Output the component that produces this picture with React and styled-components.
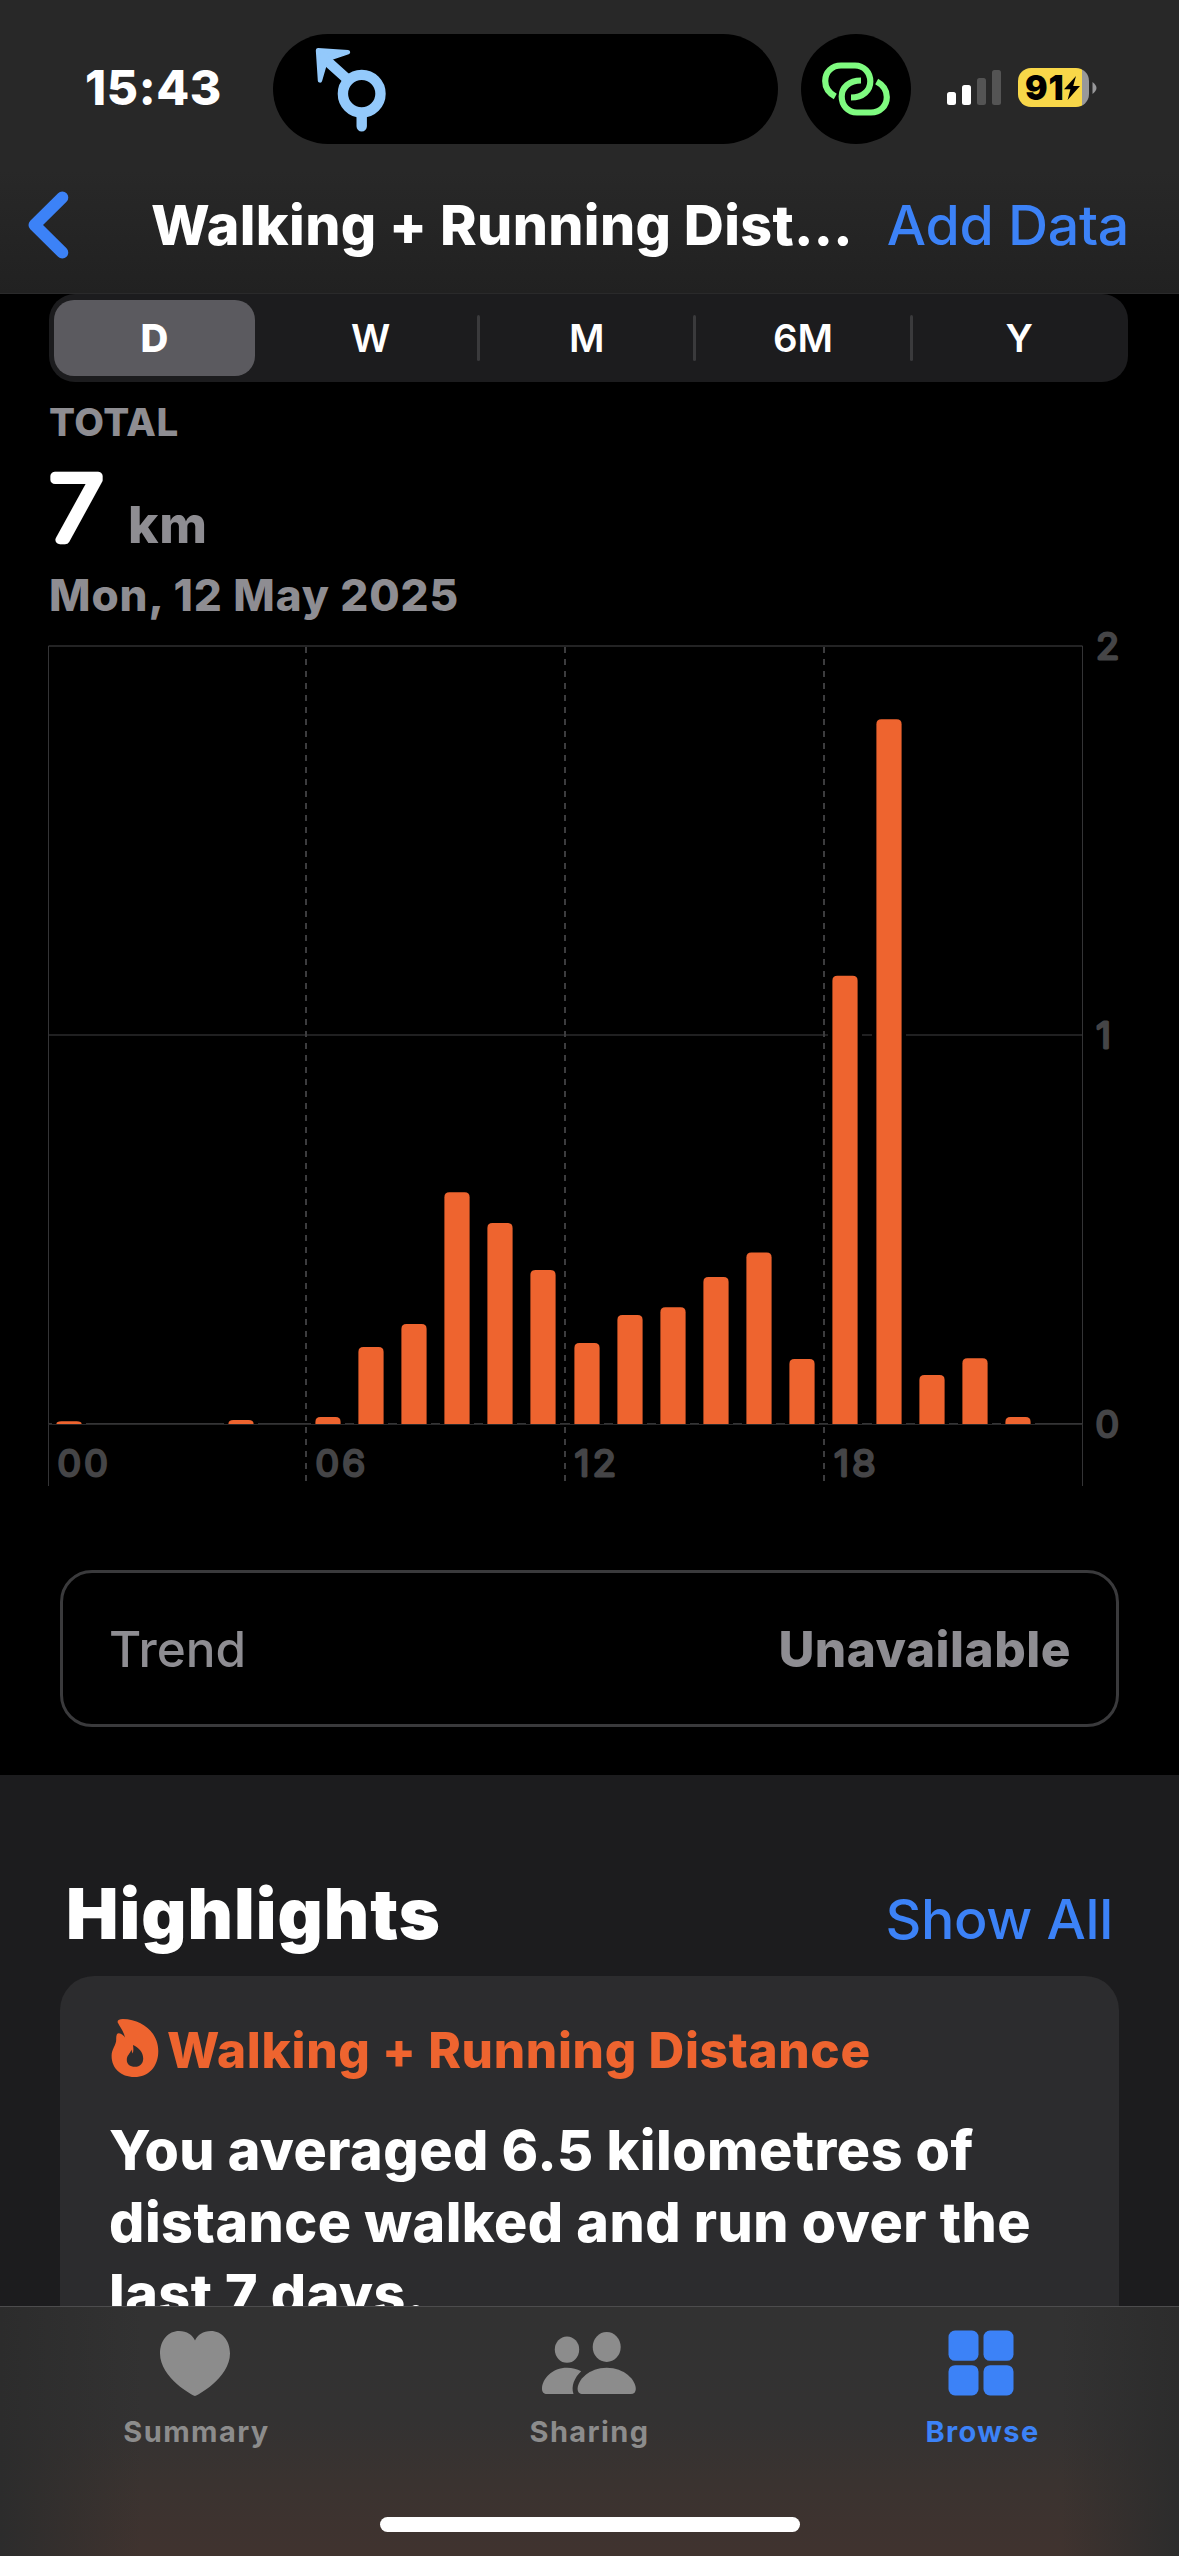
import styled, { createGlobalStyle } from "styled-components";

const BLUE = "#3c82f7";
const ORANGE = "#ee642f";
const GREY = "#8e8d92";
const AXIS = "#454547";

const GlobalStyle = createGlobalStyle`
  body {
    margin: 0;
    background: #000;
  }
  * {
    box-sizing: border-box;
  }
  svg {
    display: block;
    flex: none;
  }
`;

const Screen = styled.div`
  width: 1179px;
  height: 2556px;
  display: flex;
  flex-direction: column;
  overflow: hidden;
  background: #000;
  color: #fff;
  font-family: Inter, "Liberation Sans", sans-serif;
  white-space: nowrap;
`;

const Header = styled.header`
  flex: none;
  height: 294px;
  padding-top: 34px;
  background: linear-gradient(#282828 0%, #282828 58%, #212121 100%);
  border-bottom: 1px solid #2a2a2b;
`;

const StatusBar = styled.div`
  height: 110px;
  display: flex;
  align-items: center;
`;

const Time = styled.span`
  width: 273px;
  padding: 0 0 3px 85px;
  font-size: 48px;
  font-weight: 800;
  letter-spacing: 0.6px;
`;

const Island = styled.div`
  width: ${(props) => props.width}px;
  height: 110px;
  border-radius: 55px;
  margin-right: ${(props) => props.gap}px;
  background: #000;
`;

const IslandIcon = styled.div`
  padding-left: 27px;
`;

const Signal = styled.div`
  width: 71px;
  height: 35px;
  margin-bottom: 3px;
  display: flex;
  align-items: flex-end;
  gap: 6px;
`;

const SignalBar = styled.span`
  width: 9px;
  height: ${(props) => props.height}px;
  border-radius: 2.5px;
  background: ${(props) => (props.$active ? "#fff" : "#545454")};
`;

const Battery = styled.div`
  width: 71px;
  height: 39px;
  margin-bottom: 3px;
  padding-left: 7px;
  display: flex;
  align-items: center;
  border-radius: 13px;
  background: linear-gradient(to right, #f8d749 64px, #98989a 64px);
  color: #000;
  font-size: 33.5px;
  font-weight: 900;
  letter-spacing: 0.8px;
`;

const TipSlot = styled.div`
  margin-bottom: 3px;
`;

const NavBar = styled.nav`
  height: 149px;
  padding: 12px 50px 0 25px;
  display: flex;
  align-items: center;
  font-size: 55.5px;
`;

const NavTitle = styled.h1`
  margin: 0 0 0 79px;
  width: 737px;
  font-size: inherit;
  font-weight: 840;
  letter-spacing: 0.35px;
`;

const TextLink = styled.a`
  color: ${BLUE};
  font-size: 55.5px;
  font-weight: 470;
  letter-spacing: -0.3px;
`;

const Content = styled.main`
  flex: 1;
  min-height: 0;
  overflow: hidden;
  display: flex;
  flex-direction: column;
`;

const Segments = styled.div`
  flex: none;
  width: 1079px;
  height: 88px;
  margin-left: 49px;
  padding-left: 5px;
  display: flex;
  align-items: center;
  border-radius: 26px;
  background: #1c1c1e;
`;

const SegmentSlot = styled.div`
  display: flex;
  align-items: center;
`;

const Segment = styled.div`
  width: 201px;
  height: 76px;
  display: flex;
  align-items: center;
  justify-content: center;
  border-radius: 20px;
  font-size: 38.5px;
  font-weight: ${(props) => (props.$selected ? 760 : 600)};
  background: ${(props) => (props.$selected ? "#5b5a5f" : "transparent")};
`;

const Divider = styled.span`
  width: 3px;
  height: 46px;
  margin: 0 6.1px;
  border-radius: 2px;
  background: ${(props) => (props.$blank ? "transparent" : "#3a3a3c")};
`;

const Summary = styled.section`
  flex: none;
  padding: 15px 49px 0;
  color: ${GREY};
  font-weight: 800;
`;

const Caption = styled.div`
  line-height: 50px;
  font-size: 38.5px;
  letter-spacing: 0.5px;
`;

const Amount = styled.div`
  height: 108px;
  display: flex;
  align-items: flex-end;
  gap: 9px;

  svg {
    overflow: visible;
  }
`;

const Unit = styled.span`
  line-height: 61px;
  font-size: 51.5px;
  letter-spacing: 0.8px;
`;

const DateLine = styled.div`
  margin-top: 13px;
  line-height: 54px;
  font-size: 44px;
  letter-spacing: 0.9px;
`;

const Trend = styled.div`
  flex: none;
  height: 157px;
  margin: 70px 60px 48px;
  padding: 0 45px 0 46px;
  display: flex;
  align-items: center;
  justify-content: space-between;
  border: 3px solid #3a3a3c;
  border-radius: 32px;
  color: ${GREY};
  font-size: 49.5px;
`;

const TrendLabel = styled.span`
  font-weight: 460;
  letter-spacing: 0;
`;

const TrendValue = styled.span`
  font-weight: 800;
  letter-spacing: 0.5px;
`;

const HighlightsSection = styled.section`
  flex: 1;
  padding: 97px 60px 0;
  background: #1c1c1e;
`;

const SectionHead = styled.div`
  height: 84px;
  margin-bottom: 20px;
  padding: 0 6px;
  display: flex;
  align-items: baseline;
  justify-content: space-between;
`;

const SectionTitle = styled.h2`
  margin: 0;
  line-height: 84px;
  font-size: 70px;
  font-weight: 900;
  letter-spacing: 1px;
`;

const Card = styled.article`
  height: 640px;
  padding: 44px 49px 0;
  border-radius: 34px;
  background: #2c2c2e;
`;

const CardHead = styled.div`
  height: 60px;
  display: flex;
  align-items: center;
  gap: 8px;
  color: ${ORANGE};
  font-size: 49.5px;
  font-weight: 800;
  letter-spacing: 0.66px;

  svg {
    margin: 0 0 4px 2px;
  }
`;

const CardText = styled.p`
  margin: 34px 0 0;
  font-size: 55.5px;
  line-height: 72px;
  font-weight: 830;
  letter-spacing: 0.5px;
`;

const TabBar = styled.footer`
  flex: none;
  height: 250px;
  border-top: 1px solid #4c4c4d;
  background:
    linear-gradient(to right, #2c2c2c, transparent 12%, transparent 90%, #2c2c2c),
    linear-gradient(#323232 0%, #333232 45%, #3a3330 70%, #40332f 100%);
`;

const Tabs = styled.div`
  display: grid;
  grid-template-columns: repeat(3, 1fr);
`;

const Tab = styled.div`
  padding-top: 18px;
  display: flex;
  flex-direction: column;
  align-items: center;
  gap: 11px;
  color: ${(props) => (props.$active ? BLUE : "#8c8c8c")};
  font-size: 29px;
  line-height: 40px;
  font-weight: 650;
  letter-spacing: 1.4px;

  svg {
    margin-right: 3px;
  }
`;

const HomeIndicator = styled.div`
  width: 420px;
  height: 15px;
  margin: 65px auto 0;
  border-radius: 8px;
  background: #fff;
`;

const WayfindingIcon = () => (
  <svg width="110" height="110" viewBox="300 34 110 110">
    <g fill="none" stroke="#93c9fb" strokeWidth="10.4" strokeLinecap="round">
      <circle cx="361.7" cy="93.7" r="18.8" />
      <path d="M361.7 115v11.3M326 60l20 18" />
    </g>
    <path
      d="M318 50.3 348 52.2 331 57.8 324.5 65 320 80.5Z"
      fill="#93c9fb"
      stroke="#93c9fb"
      strokeWidth="4.4"
      strokeLinejoin="round"
    />
  </svg>
);

const LINK_LOOP =
  "M835.3 96C828.6 92.4 825.2 86.5 825.2 80.5C825.2 71.5 832 65 841 65H855C864 65 870.3 72 870.3 81C870.3 90 863 97 851 97";

const LinkIcon = () => (
  <svg width="110" height="110" viewBox="801 33.5 110 110">
    <g fill="none" stroke="#7ffb80" strokeWidth="6.2">
      <path d={LINK_LOOP} />
      <path d={LINK_LOOP} transform="rotate(180 856 88.5)" />
    </g>
  </svg>
);

const BoltIcon = () => (
  <svg width="16" height="24" viewBox="0 0 16 24">
    <path d="M12 0 0 13.2H6.4L3.6 24 16 10H9.2Z" fill="#000" />
  </svg>
);

const BatteryTip = () => (
  <svg width="8" height="12" viewBox="0 0 8 12">
    <path d="M3.5 0C6 2 7.5 4 7.5 6S6 10 3.5 12Z" fill="#98989a" />
  </svg>
);

const BackIcon = () => (
  <svg width="47" height="74" viewBox="25 187.5 47 74">
    <path
      d="M62.3 197 34.5 224.5 62.3 252"
      fill="none"
      stroke={BLUE}
      strokeWidth="12"
      strokeLinecap="round"
      strokeLinejoin="round"
    />
  </svg>
);

const FlameIcon = () => (
  <svg width="48" height="58" viewBox="0 0 48 58">
    <path
      fill="currentColor"
      fillRule="evenodd"
      d="M7 4C5.6 1.5 8 0 11.8 0C32 .5 47.3 14 47.3 32C47.3 48 37.5 58 23.5 58C9.5 58 .6 49 .6 37C.6 29.5 5.5 26.5 5.2 20C5.1 16 6 14 8 14.2C10.5 14.5 12.5 16.5 14 18.5C12.5 12 9 8 7 4ZM22 26C22.6 30 22.5 32 21.8 34.5C21 33 20.6 31.5 20.3 30.5C19.5 34.5 15.8 36 15.8 41C15.8 45 19 47.8 24 47.8C29 47.8 32.2 44.5 32.2 39.5C32.2 33 27.5 28.5 22 26Z"
    />
  </svg>
);

const HeartIcon = () => (
  <svg width="70" height="76" viewBox="0 -6 70 76">
    <path
      fill="currentColor"
      d="M35 65C33.5 65 0 47 0 22.5C0 9 8.5 0 19 0C27 0 32.5 4 35 9.5C37.5 4 43 0 51 0C61.5 0 70 9 70 22.5C70 47 36.5 65 35 65Z"
    />
  </svg>
);

const PeopleIcon = () => (
  <svg width="96" height="76" viewBox="540 2325 96 76">
    <g fill="currentColor">
      <ellipse cx="567" cy="2349.6" rx="12.2" ry="13.2" />
      <ellipse cx="606.7" cy="2347" rx="14" ry="15" />
      <path d="M582.7 2394C579.5 2394 577.6 2392 577.6 2389C577.6 2380 589 2367.7 606.7 2367.7C624.5 2367.7 635.8 2380 635.8 2389C635.8 2392 634 2394 630.8 2394Z" />
      <path d="M547 2394C544 2394 542 2392 542 2389C542 2378.5 552.5 2367.7 567 2367.7C572.5 2367.7 577 2369 581.2 2371.3C574.5 2377.5 570.8 2386.5 573.5 2394Z" />
    </g>
  </svg>
);

const GridIcon = () => (
  <svg width="66" height="76" viewBox="-0.5 -5.5 66 76">
    <g fill="currentColor">
      <rect x="0" y="0" width="30" height="30.3" rx="6.5" />
      <rect x="35" y="0" width="30" height="30.3" rx="6.5" />
      <rect x="0" y="34.7" width="30" height="30.3" rx="6.5" />
      <rect x="35" y="34.7" width="30" height="30.3" rx="6.5" />
    </g>
  </svg>
);

// thin face with a round-joined stroke gives the soft digits
const RoundText = styled.text`
  font-family: Inter, "Liberation Sans", sans-serif;
  font-size: ${(props) => props.$size}px;
  font-weight: ${(props) => props.$weight};
  letter-spacing: ${(props) => props.$spacing || 0}px;
  fill: ${(props) => props.$color};
  stroke: ${(props) => props.$color};
  stroke-width: ${(props) => props.$stroke}px;
  stroke-linejoin: round;
`;

// kilometres per hour of the day
const hours = [
  0.007, 0, 0, 0, 0.01, 0, 0.018, 0.198, 0.257, 0.596, 0.517, 0.396, 0.208,
  0.28, 0.3, 0.378, 0.441, 0.167, 1.152, 1.812, 0.126, 0.169, 0.018, 0,
];

const TOP = 646;
const BASE = 1424;
const LEFT = 48.5;
const RIGHT = 1082.5;
const FOOT = 1486;
const KM = (BASE - TOP) / 2;
const STEP = 43.15;
const BAR = 25.2;

const barPath = (x, h) => {
  const r = Math.min(5, h);
  return `M${x} ${BASE}V${BASE - h + r}q0 ${-r} 5 ${-r}H${x + BAR - 5}q5 0 5 ${r}V${BASE}Z`;
};

const Chart = () => {
  const bars = hours
    .map((km, i) => ({ x: Math.floor(56.2 + i * STEP) + 0.4, h: km * KM }))
    .filter((bar) => bar.h > 0);

  return (
    <svg width="1179" height="878" viewBox="0 622 1179 878">
      <g strokeWidth="2">
        <path d={`M${LEFT} ${TOP}H${RIGHT}`} stroke="#232324" />
        <path d={`M${LEFT} ${TOP + KM}H${RIGHT}`} stroke="#202021" />
        <path d={`M${LEFT} ${BASE}H${RIGHT}`} stroke="#343435" />
      </g>
      <g stroke="#343436" strokeWidth="1">
        <path d={`M${LEFT} ${TOP}V${FOOT}`} />
        <path d={`M${RIGHT} ${TOP}V${FOOT}`} />
      </g>
      <g stroke="#3c3c3e" strokeWidth="2" strokeDasharray="6 6">
        {[306, 565, 824].map((x) => (
          <path key={x} d={`M${x} ${TOP + 1}V${FOOT}`} />
        ))}
      </g>
      {bars.map(({ x, h }) => (
        <rect key={x} x={x - 4.4} y={BASE - h - 4} width={BAR + 8.8} height={h + 4.5} />
      ))}
      <path d={`M${LEFT} ${BASE + 0.5}H${RIGHT}`} stroke="#29292a" />
      {bars.map(({ x, h }) => (
        <path key={x} d={barPath(x, h)} fill={ORANGE} />
      ))}
      {[
        ["2", 1096, 658.5],
        ["1", 1096, 1047.5],
        ["0", 1095.5, 1436.8],
        ["00", 57.5, 1475.8],
        ["06", 315.5, 1475.8],
        ["12", 574.5, 1475.8],
        ["18", 834, 1475.8],
      ].map(([label, x, y]) => (
        <RoundText
          key={label}
          transform={`translate(${x} ${y}) scale(1.07 1)`}
          $size={35.5}
          $weight={360}
          $stroke={3}
          $spacing={3}
          $color={AXIS}
        >
          {label}
        </RoundText>
      ))}
    </svg>
  );
};

const App = () => {
  return (
    <Screen>
      <GlobalStyle />
      <Header>
        <StatusBar>
          <Time>15:43</Time>
          <Island width={505} gap={23}>
            <IslandIcon>
              <WayfindingIcon />
            </IslandIcon>
          </Island>
          <Island width={110} gap={36}>
            <LinkIcon />
          </Island>
          <Signal>
            <SignalBar height={13} $active />
            <SignalBar height={20} $active />
            <SignalBar height={27} />
            <SignalBar height={35} />
          </Signal>
          <Battery>
            91
            <BoltIcon />
          </Battery>
          <TipSlot>
            <BatteryTip />
          </TipSlot>
        </StatusBar>
        <NavBar>
          <BackIcon />
          <NavTitle>Walking + Running Dist…</NavTitle>
          <TextLink>Add Data</TextLink>
        </NavBar>
      </Header>
      <Content>
        <Segments>
          {["D", "W", "M", "6M", "Y"].map((label, i) => (
            <SegmentSlot key={label}>
              {i > 0 && <Divider $blank={i === 1} />}
              <Segment $selected={i === 0}>{label}</Segment>
            </SegmentSlot>
          ))}
        </Segments>
        <Summary>
          <Caption>TOTAL</Caption>
          <Amount>
            <svg width="70" height="108" viewBox="0 0 70 108">
              <RoundText
                transform="translate(0.5 92.5) scale(1.11 1)"
                $size={88}
                $weight={200}
                $stroke={8.5}
                $color="#fff"
              >
                7
              </RoundText>
            </svg>
            <Unit>km</Unit>
          </Amount>
          <DateLine>Mon, 12 May 2025</DateLine>
        </Summary>
        <Chart />
        <Trend>
          <TrendLabel>Trend</TrendLabel>
          <TrendValue>Unavailable</TrendValue>
        </Trend>
        <HighlightsSection>
          <SectionHead>
            <SectionTitle>Highlights</SectionTitle>
            <TextLink>Show All</TextLink>
          </SectionHead>
          <Card>
            <CardHead>
              <FlameIcon />
              Walking + Running Distance
            </CardHead>
            <CardText>
              You averaged 6.5 kilometres of
              <br />
              distance walked and run over the
              <br />
              last 7 days.
            </CardText>
          </Card>
        </HighlightsSection>
      </Content>
      <TabBar>
        <Tabs>
          <Tab>
            <HeartIcon />
            Summary
          </Tab>
          <Tab>
            <PeopleIcon />
            Sharing
          </Tab>
          <Tab $active>
            <GridIcon />
            Browse
          </Tab>
        </Tabs>
        <HomeIndicator />
      </TabBar>
    </Screen>
  );
};

export default App;
